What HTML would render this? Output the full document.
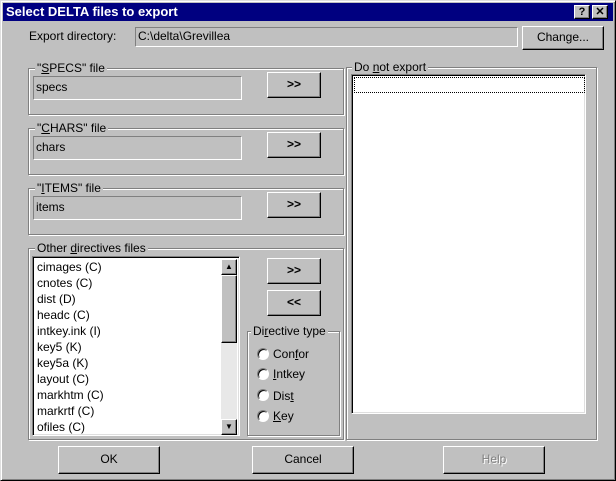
<!DOCTYPE html><html><head><style>
*{box-sizing:border-box;margin:0;padding:0}
body{width:616px;height:481px;background:#c0c0c0;font-family:"Liberation Sans",Arial,sans-serif;font-size:12px;color:#000;position:relative;overflow:hidden}
.a{position:absolute}
.win{left:0;top:0;width:616px;height:481px;border:1px solid;border-color:#dfdfdf #000 #000 #dfdfdf;box-shadow:inset 1px 1px #fff,inset -1px -1px #808080}
.title{left:3px;top:3px;width:610px;height:18px;background:#000080;color:#fff;font-weight:bold;font-size:13px;line-height:18px;padding-left:3px}
.tb{top:5px;width:16px;height:14px;background:#c0c0c0;border:1px solid;border-color:#fff #000 #000 #fff;box-shadow:inset -1px -1px #808080;color:#000;font-weight:bold;font-size:11px;text-align:center;line-height:12px}
.fld{border:1px solid;border-color:#808080 #fff #fff #808080;padding-left:2px;line-height:20px}
.btn{border:1px solid;border-color:#fff #000 #000 #fff;box-shadow:inset -1px -1px #808080;text-align:center}
.grp{border:1px solid #808080;box-shadow:1px 1px #fff,inset 1px 1px #fff}
.lg{background:#c0c0c0;padding:0 2px;top:-8px;left:6px;line-height:14px}
.list{background:#fff;border:1px solid;border-color:#808080 #fff #fff #808080;box-shadow:inset 1px 1px #000,inset -1px -1px #dfdfdf}
.it{left:4px;line-height:16px}
.rd{width:12px;height:12px;border-radius:50%;background:#fff;border:1px solid;border-color:#808080 #fff #fff #808080;box-shadow:inset 1px 1px #000}
u{text-decoration:underline}
</style></head><body>
<div class="a win"></div>
<div class="a title">Select DELTA files to export</div>
<div class="a tb" style="left:574px">?</div>
<div class="a tb" style="left:592px">✕</div>

<div class="a" style="left:29px;top:29px;line-height:14px">Export directory:</div>
<div class="a fld" style="left:135px;top:27px;width:383px;height:20px;line-height:17px">C:\delta\Grevillea</div>
<div class="a btn" style="left:522px;top:26px;width:82px;height:24px;line-height:21px">Chan<u>g</u>e...</div>

<div class="a grp" style="left:28px;top:68px;width:316px;height:47px"><div class="a lg">"<u>S</u>PECS" file</div></div>
<div class="a fld" style="left:33px;top:76px;width:209px;height:24px">specs</div>
<div class="a btn" style="left:267px;top:72px;width:54px;height:26px;line-height:23px;font-weight:bold">&gt;&gt;</div>

<div class="a grp" style="left:28px;top:128px;width:316px;height:47px"><div class="a lg">"<u>C</u>HARS" file</div></div>
<div class="a fld" style="left:33px;top:136px;width:209px;height:24px">chars</div>
<div class="a btn" style="left:267px;top:132px;width:54px;height:26px;line-height:23px;font-weight:bold">&gt;&gt;</div>

<div class="a grp" style="left:28px;top:188px;width:316px;height:47px"><div class="a lg">"<u>I</u>TEMS" file</div></div>
<div class="a fld" style="left:33px;top:196px;width:209px;height:24px">items</div>
<div class="a btn" style="left:267px;top:192px;width:54px;height:26px;line-height:23px;font-weight:bold">&gt;&gt;</div>

<div class="a grp" style="left:28px;top:248px;width:316px;height:192px"><div class="a lg">Other <u>d</u>irectives files</div></div>
<div class="a list" style="left:32px;top:256px;width:208px;height:180px;overflow:hidden">
<div class="a it" style="top:2px">cimages (C)</div>
<div class="a it" style="top:18px">cnotes (C)</div>
<div class="a it" style="top:34px">dist (D)</div>
<div class="a it" style="top:50px">headc (C)</div>
<div class="a it" style="top:66px">intkey.ink (I)</div>
<div class="a it" style="top:82px">key5 (K)</div>
<div class="a it" style="top:98px">key5a (K)</div>
<div class="a it" style="top:114px">layout (C)</div>
<div class="a it" style="top:130px">markhtm (C)</div>
<div class="a it" style="top:146px">markrtf (C)</div>
<div class="a it" style="top:162px">ofiles (C)</div>
<div class="a" style="left:188px;top:2px;width:16px;height:176px;background:#e8e8e8"></div>
<div class="a btn" style="left:188px;top:2px;width:16px;height:16px;font-size:8px;line-height:14px;background:#c0c0c0">▲</div>
<div class="a btn" style="left:188px;top:18px;width:16px;height:68px;background:#c0c0c0"></div>
<div class="a btn" style="left:188px;top:162px;width:16px;height:16px;font-size:8px;line-height:14px;background:#c0c0c0">▼</div>
</div>
<div class="a btn" style="left:267px;top:258px;width:54px;height:26px;line-height:23px;font-weight:bold">&gt;&gt;</div>
<div class="a btn" style="left:267px;top:290px;width:54px;height:26px;line-height:23px;font-weight:bold">&lt;&lt;</div>

<div class="a grp" style="left:247px;top:331px;width:93px;height:105px"><div class="a lg" style="left:3px">Di<u>r</u>ective type</div></div>
<div class="a rd" style="left:257px;top:348px"></div><div class="a" style="left:273px;top:347px">Con<u>f</u>or</div>
<div class="a rd" style="left:257px;top:368px"></div><div class="a" style="left:273px;top:367px"><u>I</u>ntkey</div>
<div class="a rd" style="left:257px;top:389px"></div><div class="a" style="left:273px;top:389px">Dis<u>t</u></div>
<div class="a rd" style="left:257px;top:410px"></div><div class="a" style="left:273px;top:409px"><u>K</u>ey</div>

<div class="a grp" style="left:346px;top:67px;width:251px;height:373px"><div class="a lg" style="left:5px">Do <u>n</u>ot export</div></div>
<div class="a list" style="left:351px;top:74px;width:235px;height:340px"><div class="a" style="left:2px;top:2px;width:231px;height:16px;border:1px dotted #000"></div></div>

<div class="a btn" style="left:58px;top:446px;width:102px;height:28px;line-height:25px">OK</div>
<div class="a btn" style="left:252px;top:446px;width:102px;height:28px;line-height:25px">Cancel</div>
<div class="a btn" style="left:443px;top:446px;width:102px;height:28px;line-height:25px;color:#808080;text-shadow:1px 1px #fff">Help</div>
</body></html>
